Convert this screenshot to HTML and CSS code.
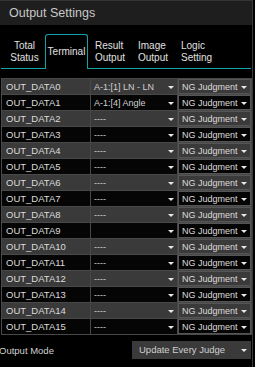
FILE: index.html
```html
<!DOCTYPE html>
<html lang="en">
<head>
  <meta charset="UTF-8" />
  <title>Output Settings</title>
  <link rel="stylesheet" href="styles.css">
</head>
<body>
  <div class="panel">
    <header class="titlebar">Output Settings</header>

    <nav class="tabs">
      <div class="tab tab-first">Total<br>Status</div>
      <div class="tab active">Terminal</div>
      <div class="tab">Result<br>Output</div>
      <div class="tab">Image<br>Output</div>
      <div class="tab">Logic<br>Setting</div>
    </nav>

    <table class="terminals">
      <colgroup>
        <col class="col-name">
        <col class="col-src">
        <col class="col-judge">
      </colgroup>
      <tbody id="rows"></tbody>
    </table>

    <div class="mode">
      <span class="mode-label">Output Mode</span>
      <div class="mode-select">Update Every Judge<i class="arrow"></i></div>
    </div>
  </div>

  <script>
    const sources = ['A-1:[1] LN - LN', 'A-1:[4] Angle'];
    const rows = document.getElementById('rows');
    for (let i = 0; i < 16; i++) {
      let src = sources[i] || '----';
      if (i === 9) src = '';
      const tr = document.createElement('tr');
      tr.innerHTML = `
        <td class="name">OUT_DATA${i}</td>
        <td class="src"><span>${src}</span><i class="arrow"></i></td>
        <td class="judge"><div class="judge-box">NG Judgment<i class="arrow"></i></div></td>
      `;
      rows.appendChild(tr);
    }
  </script>
</body>
</html>
```

FILE: styles.css
```css
body {
  margin: 0;
  background: #000;
  font-family: "Liberation Sans", Arial, sans-serif;
  color: #dcdcdc;
}

.panel {
  width: 252px;
  height: 367px;
  background: #000;
  border-right: 1px solid #3a3a3a;
  overflow: hidden;
}

.titlebar {
  height: 25px;
  line-height: 25px;
  padding-left: 9px;
  background: #1e1e1e;
  border-top: 1px solid #333;
  box-sizing: border-box;
  font-size: 12.5px;
  color: #c8c8c8;
}

.tabs {
  display: flex;
  margin: 9px 1px 0 1px;
  padding-left: 3px;
  height: 34px;
  border-bottom: 1px solid #0fa3a6;
  font-size: 10px;
  line-height: 12px;
}

.tab {
  width: 43px;
  padding: 6px 0 0 7px;
  box-sizing: border-box;
  color: #e0e0e0;
}

.tab-first {
  width: 41px;
  text-align: center;
  padding-left: 0;
}

.tab.active {
  border: 1px solid #0fa3a6;
  border-bottom: none;
  border-radius: 3px 3px 0 0;
  background: #000;
  margin-bottom: -1px;
  padding: 11px 0 0 0;
  text-align: center;
  height: 35px;
}

.terminals {
  margin: 9px 0 0 1px;
  width: 250px;
  border-collapse: collapse;
  table-layout: fixed;
  font-size: 9px;
}

.col-name { width: 89px; }
.col-src { width: 87px; }
.col-judge { width: 74px; }

.terminals td {
  height: 15px;
  padding: 0;
  border: 1px solid #484848;
  white-space: nowrap;
  overflow: hidden;
}

.terminals tr:nth-child(odd) td {
  background: #3a3a3a;
}

.terminals tr:nth-child(even) td {
  background: #050505;
}

.terminals td.name {
  padding-left: 4px;
  font-size: 9.5px;
}

.terminals td.src {
  padding-left: 3px;
  position: relative;
  color: #d0d0d0;
}

.src .arrow {
  position: absolute;
  right: 3px;
  top: 7px;
}

.judge-box {
  position: relative;
  height: 15px;
  line-height: 15px;
  padding-left: 3px;
  border: 1px solid #555;
  box-sizing: border-box;
}

.judge-box .arrow {
  position: absolute;
  right: 3px;
  top: 6px;
}

.arrow {
  display: inline-block;
  width: 0;
  height: 0;
  border-left: 3px solid transparent;
  border-right: 3px solid transparent;
  border-top: 3px solid #e8e8e8;
}

.mode {
  display: flex;
  align-items: center;
  justify-content: space-between;
  margin-top: 6px;
  padding-right: 1px;
  font-size: 9.5px;
}

.mode-label {
  margin-left: -1px;
  color: #d0d0d0;
}

.mode-select {
  position: relative;
  width: 119px;
  height: 18px;
  line-height: 18px;
  padding-left: 7px;
  box-sizing: border-box;
  background: #3a3a3a;
  color: #cfcfcf;
}

.mode-select .arrow {
  position: absolute;
  right: 4px;
  top: 8px;
}
```
